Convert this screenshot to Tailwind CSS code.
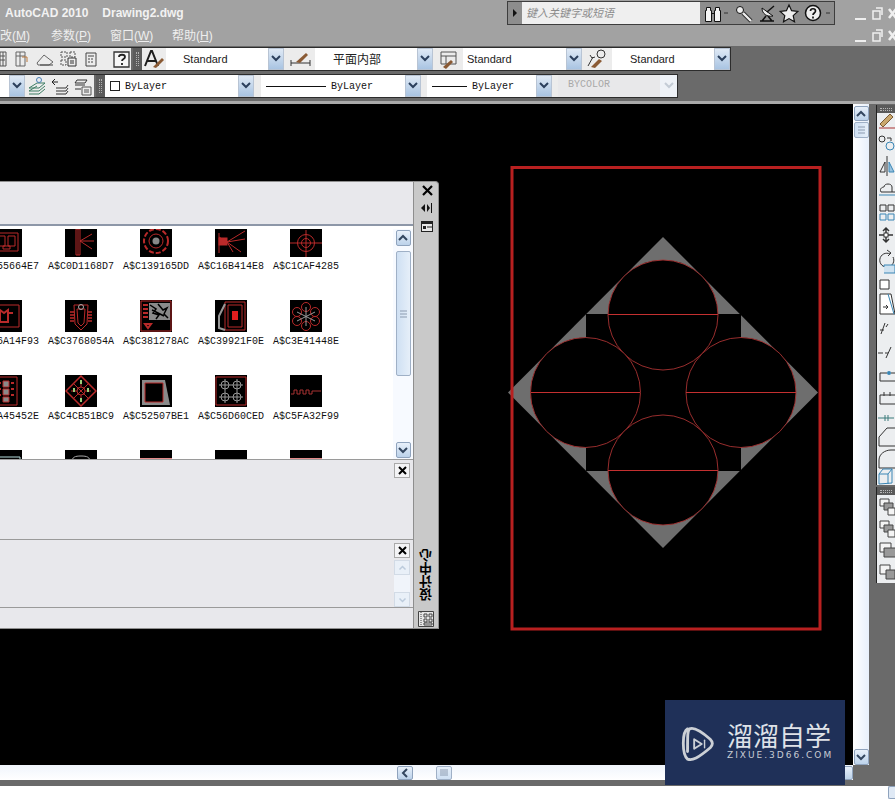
<!DOCTYPE html>
<html lang="zh">
<head>
<meta charset="utf-8">
<script src="https://cdn.jsdelivr.net/npm/@tailwindcss/browser@4"></script>
</head>
<body class="bg-white">
<div class="relative w-[895px] h-[806px] overflow-hidden flex flex-col bg-white font-['Liberation_Sans','Noto_Sans_CJK_SC',sans-serif]">

  <!-- title bar -->
  <div class="h-[25px] shrink-0 bg-[#a2a2a2] flex items-start">
    <div class="pt-[6px] pl-[5px] w-[507px] text-[12px] leading-[14px] font-bold text-[#f2f2f2] whitespace-nowrap flex gap-[14px]"><span>AutoCAD 2010</span><span>Drawing2.dwg</span></div>
    <div class="mt-[1px] w-[328px] h-[24px] border border-[#3d3d3d] bg-[#8d8d8d] flex items-center">
      <svg class="w-[14px] h-[22px]" viewBox="0 0 14 22"><path d="M5 7l4 4-4 4z" fill="#111"/></svg>
      <div class="w-[178px] h-[22px] bg-[#efefef] pl-[4px] text-[11px] leading-[22px] italic text-[#8c8c8c]">键入关键字或短语</div>
      <svg class="w-[133px] h-[22px]" viewBox="0 0 133 22" fill="none" stroke="#111">
        <g fill="#f4f4f4"><path d="M6.500 5.500h4v3h1v11h-6v-11h1z"/><path d="M15.500 5.500h4v3h1v11h-6v-11h1z"/></g><path d="M11.500 11.500h3"/>
        <path d="M24 11h4" stroke="#333"/>
        <circle cx="40" cy="8" r="3.500" fill="#eee"/><path d="M43 11l8 8" stroke="#222" stroke-width="4"/><path d="M43 11l8 8" stroke="#eee" stroke-width="2.400"/>
        <path d="M60 19h14M66 14l-4 5M68 14l4 5" stroke-width="1.600"/><path d="M62 6c0 6 5 9 11 8z" fill="#eee"/><path d="M67 10l7-6" stroke-width="1.400"/>
        <path d="M89 3l2.600 5.700 6.200.7-4.600 4.200 1.300 6.100-5.500-3.100-5.500 3.100 1.300-6.100-4.600-4.200 6.200-.7z" fill="#eee" stroke-width="1.200"/>
        <circle cx="113" cy="11" r="7.500" fill="#eee" stroke-width="1.500"/><path d="M110.500 9c0-3 5-3 5 0 0 2-2.500 2-2.500 4M113 14.500v2" stroke-width="1.700"/>
        <path d="M126 11h4" stroke="#333"/>
      </svg>
    </div>
    <div class="ml-[20px] pt-[5px]">
      <svg class="w-[40px] h-[18px]" viewBox="0 0 40 18" fill="none" stroke="#efefef" stroke-width="2"><path d="M0 14h11"/><path d="M18 6h7v8h-7zM21 3h6v7" stroke-width="1.500"/><path d="M34 4l7 9M41 4l-7 9" stroke-width="2.500"/></svg>
    </div>
  </div>

  <!-- menu bar -->
  <div class="h-[21px] shrink-0 bg-[#a2a2a2] flex items-start">
    <div class="-ml-[12px] w-[867px] pt-[2px] text-[12px] leading-[18px] text-[#eeeeee] flex whitespace-nowrap">
      <span class="w-[63px]">修改(<u>M</u>)</span><span class="w-[59px]">参数(<u>P</u>)</span><span class="w-[62px]">窗口(<u>W</u>)</span><span>帮助(<u>H</u>)</span>
    </div>
    <div class="pt-[3px] shrink-0">
      <svg class="w-[40px] h-[18px]" viewBox="0 0 40 18" fill="none" stroke="#efefef" stroke-width="2"><path d="M0 13h11"/><path d="M18 5h7v8h-7zM21 2h6v7" stroke-width="1.500"/><path d="M34 3l7 9M41 3l-7 9" stroke-width="2.500"/></svg>
    </div>
  </div>

  <!-- toolbars -->
  <div class="h-[55px] shrink-0 bg-[#6a6a6a] pt-[1px] font-['Liberation_Sans',sans-serif]">
    <div class="h-[24px] w-[731px] flex border-y border-[#2c2c2c] border-r bg-[#ececec]">
      <svg class="w-[131px] h-[22px] shrink-0" viewBox="0 0 131 22" fill="none" stroke="#555">
        <path d="M-4 4h10v14H-4zM-3 8h8M-3 12h8M0 4v14M3 4v14"/>
        <path d="M16 4h9v14h-9zM16 8h9M20 4v14" stroke="#666"/><path d="M22 9h5v5" stroke="#b9763b" />
        <path d="M37 15l7-8 9 7-4 3H38z" stroke="#666"/><path d="M40 17h13" stroke="#444"/>
        <path d="M61 4h6v5h-6zM70 4h5v5h-5zM61 12h5v5h-5z" stroke-dasharray="2 1"/><path d="M68 10h8v8h-8zM70 13h4M70 15h4" stroke="#333"/>
        <path d="M86 5h10v13H86zM88 8h6M88 11h2M91 11h2M88 14h2M91 14h2" stroke="#444"/>
        <path d="M114 4h15v15h-15z" fill="#f7f7f7" stroke="#333" stroke-width="1.300"/>
        <path d="M119 9c0-3 6-3 6 0 0 2-3 2-3 4M122 15v2" stroke="#222" stroke-width="1.800"/>
      </svg>
      <div class="w-[2px] bg-[#6a6a6a]"></div>
      <div class="w-[9px] bg-[#5c5c5c] flex justify-center"><div class="w-[3px] my-[4px] border-x border-dotted border-[#b0b0b0]"></div></div>
      <svg class="w-[24px] h-[22px] shrink-0" viewBox="0 0 24 22" fill="none"><path d="M3 18L9 3h1l6 15M5 13h9" stroke="#1c1c1c" stroke-width="2"/><path d="M11 19l9-9 2 2-8 8z" fill="#8a5a34"/></svg>
      <div class="w-[118px] flex bg-white"><span class="w-[102px] pl-[17px] text-[11px] leading-[22px] text-[#222]">Standard</span><span class="w-[16px] bg-gradient-to-b from-[#dfe9f5] to-[#a9c4e2] border border-[#b8c4d4] flex items-center justify-center"><svg class="w-[10px] h-[8px]" viewBox="0 0 10 8"><path d="M1 1l4 4 4-4" fill="none" stroke="#2b3f5c" stroke-width="2"/></svg></span></div>
      <svg class="w-[31px] h-[22px] shrink-0" viewBox="0 0 31 22" fill="none"><path d="M7 12v6M26 12v6M7 15h19" stroke="#333"/><path d="M12 14l10-9 2 2-8 8z" fill="#8a5a34"/></svg>
      <div class="w-[118px] flex bg-white"><span class="w-[102px] pl-[18px] text-[12px] leading-[22px] text-[#222] font-['Noto_Sans_CJK_SC',sans-serif]">平面内部</span><span class="w-[16px] bg-gradient-to-b from-[#dfe9f5] to-[#a9c4e2] border border-[#b8c4d4] flex items-center justify-center"><svg class="w-[10px] h-[8px]" viewBox="0 0 10 8"><path d="M1 1l4 4 4-4" fill="none" stroke="#2b3f5c" stroke-width="2"/></svg></span></div>
      <svg class="w-[30px] h-[22px] shrink-0" viewBox="0 0 30 22" fill="none"><path d="M8 4h15v12H8zM8 8h15M13 8v8" stroke="#555"/><path d="M10 19l8-7 2 2-7 7z" fill="#8a5a34"/></svg>
      <div class="w-[119px] flex bg-white"><span class="w-[103px] pl-[4px] text-[11px] leading-[22px] text-[#222]">Standard</span><span class="w-[16px] bg-gradient-to-b from-[#dfe9f5] to-[#a9c4e2] border border-[#b8c4d4] flex items-center justify-center"><svg class="w-[10px] h-[8px]" viewBox="0 0 10 8"><path d="M1 1l4 4 4-4" fill="none" stroke="#2b3f5c" stroke-width="2"/></svg></span></div>
      <svg class="w-[30px] h-[22px] shrink-0" viewBox="0 0 30 22" fill="none"><circle cx="19" cy="6" r="4" stroke="#333"/><path d="M6 18l5-9M8 7l2 3 3-1" stroke="#333"/><path d="M9 19l8-8 3 2-7 7z" fill="#8a5a34"/></svg>
      <div class="flex-1 flex bg-white"><span class="w-[102px] pl-[18px] text-[11px] leading-[22px] text-[#222]">Standard</span><span class="w-[16px] bg-gradient-to-b from-[#dfe9f5] to-[#a9c4e2] border border-[#b8c4d4] flex items-center justify-center"><svg class="w-[10px] h-[8px]" viewBox="0 0 10 8"><path d="M1 1l4 4 4-4" fill="none" stroke="#2b3f5c" stroke-width="2"/></svg></span></div>
    </div>
    <div class="h-[3px]"></div>
    <div class="h-[24px] w-[678px] flex border-y border-r border-[#2c2c2c] bg-[#ececec] font-['Liberation_Mono',monospace] text-[10px] text-[#111]">
      <div class="w-[25px] flex justify-end bg-white"><span class="w-[16px] bg-gradient-to-b from-[#dfe9f5] to-[#a9c4e2] border border-[#b8c4d4] flex items-center justify-center"><svg class="w-[10px] h-[8px]" viewBox="0 0 10 8"><path d="M1 1l4 4 4-4" fill="none" stroke="#2b3f5c" stroke-width="2"/></svg></span></div>
      <svg class="w-[69px] h-[22px] shrink-0" viewBox="0 0 69 22" fill="none">
        <path d="M4 13l8-5 8 0-6 5zM4 16l8-5M4 16h10l6-5M4 19h10l6-5" stroke="#3d7d63"/><circle cx="14" cy="5" r="2.500" stroke="#4a7fb5"/>
        <path d="M30 4l-3 3 3 3M27 7h6" stroke="#222"/><path d="M31 13h10l2-3M31 16h10l2-3M31 19h10l2-3" stroke="#333"/>
        <path d="M52 5h10l-2 3H50zM50 10h10M50 14h6" stroke="#333"/><path d="M57 12h9v8h-9zM59 15h5M59 17h5" stroke="#555"/>
      </svg>
      <div class="w-[2px] bg-[#6a6a6a]"></div>
      <div class="w-[9px] bg-[#5c5c5c] flex justify-center"><div class="w-[3px] my-[4px] border-x border-dotted border-[#b0b0b0]"></div></div>
      <div class="w-[149px] flex bg-white"><span class="w-[133px] pl-[5px] flex items-center gap-[5px]"><span class="w-[10px] h-[10px] border border-[#222]"></span>ByLayer</span><span class="w-[16px] bg-gradient-to-b from-[#dfe9f5] to-[#a9c4e2] border border-[#b8c4d4] flex items-center justify-center"><svg class="w-[10px] h-[8px]" viewBox="0 0 10 8"><path d="M1 1l4 4 4-4" fill="none" stroke="#2b3f5c" stroke-width="2"/></svg></span></div>
      <div class="w-[7px]"></div>
      <div class="w-[160px] flex bg-white"><span class="w-[144px] pl-[5px] flex items-center gap-[5px]"><span class="w-[60px] h-px bg-[#111]"></span>ByLayer</span><span class="w-[16px] bg-gradient-to-b from-[#dfe9f5] to-[#a9c4e2] border border-[#b8c4d4] flex items-center justify-center"><svg class="w-[10px] h-[8px]" viewBox="0 0 10 8"><path d="M1 1l4 4 4-4" fill="none" stroke="#2b3f5c" stroke-width="2"/></svg></span></div>
      <div class="w-[6px]"></div>
      <div class="w-[125px] flex bg-white"><span class="w-[109px] pl-[5px] flex items-center gap-[5px]"><span class="w-[35px] h-px bg-[#111]"></span>ByLayer</span><span class="w-[16px] bg-gradient-to-b from-[#dfe9f5] to-[#a9c4e2] border border-[#b8c4d4] flex items-center justify-center"><svg class="w-[10px] h-[8px]" viewBox="0 0 10 8"><path d="M1 1l4 4 4-4" fill="none" stroke="#2b3f5c" stroke-width="2"/></svg></span></div>
      <div class="w-[6px]"></div>
      <div class="flex-1 flex bg-[#e8e8ea]"><span class="w-[102px] pl-[10px] leading-[20px] text-[#a8a8a8]">BYCOLOR</span><span class="w-[17px] bg-[#eef2f7] flex items-center justify-center"><svg class="w-[10px] h-[8px]" viewBox="0 0 10 8"><path d="M1 1l4 4 4-4" fill="none" stroke="#c4ccd6" stroke-width="2"/></svg></span></div>
    </div>
  </div>
  <div class="h-[3px] shrink-0 bg-[#a9a9a9]"></div>

  <!-- work area -->
  <div class="flex-1 min-h-0 flex bg-[#6a6a6a]">
    <div class="w-[853px] flex flex-col shrink-0">
      <div class="relative flex-1 bg-black">
        <svg class="absolute left-0 top-0 w-[853px] h-[661px]" viewBox="0 104 853 661">
          <path d="M663 237L818 392.500 663 548 508 392.500z" fill="#6e6e6e"/>
          <rect x="586" y="314" width="155" height="157" fill="#000"/>
          <g fill="#000" stroke="#a83232" stroke-width=".9">
            <circle cx="663" cy="315" r="55"/>
            <circle cx="585.500" cy="392.500" r="55"/>
            <circle cx="741" cy="392.500" r="55"/>
            <circle cx="663" cy="470" r="55"/>
          </g>
          <path d="M608 314.500h110M531 392.500h109M686 392.500h110M608 470.500h110" stroke="#c43030" stroke-width="1"/>
          <rect x="512" y="167.500" width="308" height="461.500" fill="none" stroke="#b82020" stroke-width="3"/>
        </svg>

        <!-- floating palette -->
        <div class="absolute left-0 top-[77px] w-[439px] h-[448px] flex bg-[#c9c9c9] border-y border-r border-[#8e8e8e] rounded-tr-[4px]">
          <div class="w-[414px] flex flex-col bg-[#e8e8ec] border-r border-[#8e8e8e] shrink-0">
            <div class="h-[44px] shrink-0 border-b-2 border-[#8d97a8]"></div>
            <div class="h-[3px] shrink-0 bg-[#ffffff]"></div>
            <div class="h-[231px] shrink-0 flex bg-white border-b border-[#9a9a9a] overflow-hidden">
              <div class="w-[393px] shrink-0 overflow-hidden font-['Liberation_Mono',monospace] text-[10px] leading-[12px] text-[#111]">
                <div class="-mt-[4px] -ml-[31px] w-[424px] grid grid-cols-[repeat(5,75px)] auto-rows-[75px]">
                  <div class="flex flex-col items-start"><svg class="ml-[21px] w-[32px] h-[32px] bg-black" viewBox="0 0 32 32" fill="none" stroke="#b92a2a"><path d="M4 8h24v18H4zM8 11h7v10H8zM18 11h7v10h-7zM13 21h7v3h-7z"/></svg><span class="ml-[4px] mt-[4px] whitespace-nowrap">A$C055664E7</span></div>
                  <div class="flex flex-col items-start"><svg class="ml-[21px] w-[32px] h-[32px] bg-black" viewBox="0 0 32 32" fill="none" stroke="#b92a2a"><path d="M13 2v28M11 4h4v26h-4zM15 16l12-7M15 16h14M15 16l12 8" /></svg><span class="ml-[4px] mt-[4px] whitespace-nowrap">A$C0D1168D7</span></div>
                  <div class="flex flex-col items-start"><svg class="ml-[21px] w-[32px] h-[32px] bg-black" viewBox="0 0 32 32" fill="none" stroke="#b92a2a"><circle cx="16" cy="16" r="12" stroke-dasharray="5 2" stroke-width="2"/><circle cx="16" cy="16" r="7"/><circle cx="16" cy="16" r="3.500" fill="#888" stroke="none"/></svg><span class="ml-[4px] mt-[4px] whitespace-nowrap">A$C139165DD</span></div>
                  <div class="flex flex-col items-start"><svg class="ml-[21px] w-[32px] h-[32px] bg-black" viewBox="0 0 32 32" fill="none" stroke="#b92a2a"><path d="M4 8v20M4 12l8 5 18-11M12 17l18-3M12 17l14 10M12 17l6 10"/><rect x="4" y="13" width="8" height="7" fill="#b92a2a"/></svg><span class="ml-[4px] mt-[4px] whitespace-nowrap">A$C16B414E8</span></div>
                  <div class="flex flex-col items-start"><svg class="ml-[21px] w-[32px] h-[32px] bg-black" viewBox="0 0 32 32" fill="none" stroke="#b92a2a"><circle cx="16" cy="18" r="8.500"/><circle cx="16" cy="18" r="4.500"/><path d="M0 18h32M16 5v27"/></svg><span class="ml-[4px] mt-[4px] whitespace-nowrap">A$C1CAF4285</span></div>

                  <div class="flex flex-col items-start"><svg class="ml-[21px] w-[32px] h-[32px] bg-black" viewBox="0 0 32 32" fill="none" stroke="#b92a2a"><path d="M3 5h26v22H3z"/><path d="M10 10l4 3 4-3v12h-8zM6 13h4M18 13h5" stroke-width="2"/></svg><span class="ml-[4px] mt-[4px] whitespace-nowrap">A$C26A14F93</span></div>
                  <div class="flex flex-col items-start"><svg class="ml-[21px] w-[32px] h-[32px] bg-black" viewBox="0 0 32 32" fill="none" stroke="#b92a2a"><path d="M9 5h14l-1 19-6 6-6-6zM12 9h8l-1 14-3 3-3-3z"/><circle cx="16" cy="7" r="2.500" stroke="#aaa"/><path d="M5 12h4M5 15h4M5 18h4M5 21h4M23 12h4M23 15h4M23 18h4M23 21h4" stroke-width="1.500"/></svg><span class="ml-[4px] mt-[4px] whitespace-nowrap">A$C3768054A</span></div>
                  <div class="flex flex-col items-start"><svg class="ml-[21px] w-[32px] h-[32px] bg-black" viewBox="0 0 32 32" fill="none" stroke="#b92a2a"><path d="M1 1h30v30H1z"/><path d="M9 3h21v17H9z" fill="#8a8a8a" stroke="none"/><path d="M10 5l6 4-3 4 6 2-3 4M18 4l5 6 4-2-3 6 4 4M12 10l12 6" stroke="#000" stroke-width="1.500"/><path d="M3 5h5M3 9h5M3 13h5M3 17h5M5 24h6l-3 4z" stroke-width="2"/></svg><span class="ml-[4px] mt-[4px] whitespace-nowrap">A$C381278AC</span></div>
                  <div class="flex flex-col items-start"><svg class="ml-[21px] w-[32px] h-[32px] bg-black" viewBox="0 0 32 32" fill="none" stroke="#b92a2a"><path d="M10 2h20v28H10zM13 5h14v22H13z"/><path d="M10 4L4 16v12l6 2" stroke="#999" stroke-width="2"/><rect x="17" y="11" width="6" height="9" fill="#e01e1e" stroke="none"/></svg><span class="ml-[4px] mt-[4px] whitespace-nowrap">A$C39921F0E</span></div>
                  <div class="flex flex-col items-start"><svg class="ml-[21px] w-[32px] h-[32px] bg-black" viewBox="0 0 32 32" fill="none" stroke="#b92a2a"><g><circle cx="16" cy="7" r="4.500"/><circle cx="25" cy="12" r="4.500"/><circle cx="25" cy="21" r="4.500"/><circle cx="16" cy="26" r="4.500"/><circle cx="7" cy="21" r="4.500"/><circle cx="7" cy="12" r="4.500"/></g><path d="M16 7v19M25 12L7 21M7 12l18 9" stroke="#999"/></svg><span class="ml-[4px] mt-[4px] whitespace-nowrap">A$C3E41448E</span></div>

                  <div class="flex flex-col items-start"><svg class="ml-[21px] w-[32px] h-[32px] bg-black" viewBox="0 0 32 32" fill="none" stroke="#b92a2a"><path d="M5 2h22v28H5z"/><path d="M13 6h6v6h-6zM13 14h6v6h-6zM13 22h6v5h-6z" fill="#8a8a8a"/><path d="M8 8h3M8 14h3M8 20h3M21 8h3M21 14h3M21 20h3" stroke-width="2"/></svg><span class="ml-[4px] mt-[4px] whitespace-nowrap">A$C4A45452E</span></div>
                  <div class="flex flex-col items-start"><svg class="ml-[21px] w-[32px] h-[32px] bg-black" viewBox="0 0 32 32" fill="none" stroke="#b92a2a"><path d="M16 1l15 15-15 15L1 16z" stroke-width="1.500"/><circle cx="16" cy="16" r="4"/><path d="M16 6v6M6 16h6M20 16h6M16 20v6M9 9l14 14M23 9L9 23"/><path d="M15 5h2v4h-2zM8 13h2v4H8zM22 13h2v4h-2zM15 23h2v4h-2z" fill="#9ad07a" stroke="none"/></svg><span class="ml-[4px] mt-[4px] whitespace-nowrap">A$C4CB51BC9</span></div>
                  <div class="flex flex-col items-start"><svg class="ml-[21px] w-[32px] h-[32px] bg-black" viewBox="0 0 32 32" fill="none"><path d="M2 5h23l5 25H2z" fill="#8a8a8a"/><path d="M5 8h18v19H5z" fill="#000" stroke="#b92a2a"/></svg><span class="ml-[4px] mt-[4px] whitespace-nowrap">A$C52507BE1</span></div>
                  <div class="flex flex-col items-start"><svg class="ml-[21px] w-[32px] h-[32px] bg-black" viewBox="0 0 32 32" fill="none" stroke="#b92a2a"><path d="M1 2h30v28H1z"/><g stroke="#999"><circle cx="10" cy="10" r="4"/><circle cx="22" cy="10" r="4"/><circle cx="10" cy="22" r="4"/><circle cx="22" cy="22" r="4"/><path d="M4 10h12M16 10h12M10 4v12M22 4v12M4 22h12M16 22h12M10 16v12M22 16v12"/></g></svg><span class="ml-[4px] mt-[4px] whitespace-nowrap">A$C56D60CED</span></div>
                  <div class="flex flex-col items-start"><svg class="ml-[21px] w-[32px] h-[32px] bg-black" viewBox="0 0 32 32" fill="none" stroke="#a83232"><path d="M1 19h3v-4h3v4h3v-4h3v4h3v-4h3v4h3v-3h9"/></svg><span class="ml-[4px] mt-[4px] whitespace-nowrap">A$C5FA32F99</span></div>

                  <div class="flex flex-col items-start"><svg class="ml-[21px] w-[32px] h-[32px] bg-black" viewBox="0 0 32 32" fill="none" stroke="#b7dcdc"><path d="M2 7h28v24H2z"/></svg></div>
                  <div class="flex flex-col items-start"><svg class="ml-[21px] w-[32px] h-[32px] bg-black" viewBox="0 0 32 32" fill="none" stroke="#aaa"><path d="M7 12c0-5 3-6 9-6s9 1 9 6"/></svg></div>
                  <div class="flex flex-col items-start"><svg class="ml-[21px] w-[32px] h-[32px] bg-black" viewBox="0 0 32 32"><rect y="8" width="32" height="24" fill="#e58a8a"/></svg></div>
                  <div class="flex flex-col items-start"><svg class="ml-[21px] w-[32px] h-[32px] bg-black" viewBox="0 0 32 32"></svg></div>
                  <div class="flex flex-col items-start"><svg class="ml-[21px] w-[32px] h-[32px] bg-black" viewBox="0 0 32 32"><rect y="8" width="32" height="24" fill="#e58a8a"/></svg></div>
                </div>
              </div>
              <!-- list scrollbar -->
              <div class="w-[20px] shrink-0 flex flex-col items-center bg-[#f7faff]">
                <div class="w-[15px] h-[16px] mt-[1px] rounded-[2px] border border-[#8fa3bd] bg-gradient-to-b from-[#e8f0fa] to-[#bcd2ea] flex items-center justify-center"><svg class="w-[10px] h-[8px]" viewBox="0 0 10 8"><path d="M1 6l4-4 4 4" fill="none" stroke="#33465f" stroke-width="2"/></svg></div>
                <div class="w-[15px] h-[125px] mt-[5px] rounded-[2px] border border-[#9fb0c6] bg-gradient-to-r from-[#cfe0f3] to-[#e6eff9] flex items-center justify-center"><svg class="w-[7px] h-[8px]" viewBox="0 0 7 8"><path d="M0 1h7M0 4h7M0 7h7" stroke="#8c9bb0"/></svg></div>
                <div class="flex-1"></div>
                <div class="w-[15px] h-[16px] mb-px rounded-[2px] border border-[#8fa3bd] bg-gradient-to-b from-[#e8f0fa] to-[#bcd2ea] flex items-center justify-center"><svg class="w-[10px] h-[8px]" viewBox="0 0 10 8"><path d="M1 2l4 4 4-4" fill="none" stroke="#33465f" stroke-width="2"/></svg></div>
              </div>
            </div>
            <!-- preview section -->
            <div class="h-[80px] shrink-0 flex justify-end border-b border-[#9a9a9a] pr-[3px] pt-[3px]">
              <div class="w-[16px] h-[15px] bg-[#f4f4f6] border border-[#a9a9a9] flex items-center justify-center"><svg class="w-[9px] h-[9px]" viewBox="0 0 9 9"><path d="M1 1l7 7M8 1L1 8" stroke="#000" stroke-width="2"/></svg></div>
            </div>
            <!-- description section -->
            <div class="h-[68px] shrink-0 flex justify-end border-b border-[#9a9a9a] pr-[3px] pt-[3px]">
              <div class="flex flex-col w-[16px]">
                <div class="h-[15px] bg-[#f4f4f6] border border-[#a9a9a9] flex items-center justify-center"><svg class="w-[9px] h-[9px]" viewBox="0 0 9 9"><path d="M1 1l7 7M8 1L1 8" stroke="#000" stroke-width="2"/></svg></div>
                <div class="h-[15px] mt-[2px] bg-[#e9f0f8] border border-[#d2dbe6] flex items-center justify-center"><svg class="w-[9px] h-[6px]" viewBox="0 0 10 8"><path d="M1 6l4-4 4 4" fill="none" stroke="#bccbdc" stroke-width="2"/></svg></div>
                <div class="h-[17px] bg-[#f0f4fa]"></div>
                <div class="h-[15px] bg-[#e9f0f8] border border-[#d2dbe6] flex items-center justify-center"><svg class="w-[9px] h-[6px]" viewBox="0 0 10 8"><path d="M1 2l4 4 4-4" fill="none" stroke="#bccbdc" stroke-width="2"/></svg></div>
              </div>
            </div>
            <div class="flex-1"></div>
          </div>
          <!-- palette title strip -->
          <div class="flex-1 flex flex-col items-center">
            <svg class="mt-[3px] ml-[3px] w-[11px] h-[11px]" viewBox="0 0 11 11"><path d="M1 1l9 9M10 1L1 10" stroke="#000" stroke-width="2.200"/></svg>
            <svg class="mt-[7px] w-[12px] h-[10px]" viewBox="0 0 12 10"><path d="M5 1v8L1 5zM7 1v8l3-4z" fill="#111"/><path d="M11.500 0v10" stroke="#111"/></svg>
            <svg class="mt-[8px] ml-[2px] w-[12px] h-[11px]" viewBox="0 0 12 11"><rect width="12" height="11" fill="#222"/><path d="M1 3h10v7H1z" fill="#e9e9e9"/><path d="M2 5h3v3H2z" fill="#222"/><path d="M6 6h5" stroke="#222"/></svg>
            <div class="flex-1"></div>
            <div class="[writing-mode:vertical-rl] rotate-180 text-[13px] leading-[14px] font-bold text-black font-['Noto_Sans_CJK_SC',sans-serif]">设计中心</div>
            <svg class="mt-[10px] mb-[1px] w-[16px] h-[16px]" viewBox="0 0 16 16" fill="none" stroke="#444"><path d="M.5.5h15v15H.5z" fill="#e6e6e6"/><path d="M3 1v14" stroke-dasharray="1 1"/><path d="M6 3h3v3H6zM11 3h3v3h-3zM6 8h3v3H6zM11 8h3v3h-3zM6 12h8v2H6z"/></svg>
          </div>
        </div>
      </div>

      <!-- horizontal scrollbar -->
      <div class="h-[15px] shrink-0 bg-gradient-to-b from-[#f0f5fc] to-[#ffffff] flex items-center pl-[397px]">
        <div class="w-[16px] h-[14px] rounded-[2px] border border-[#8fa3bd] bg-gradient-to-b from-[#e8f0fa] to-[#bcd2ea] flex items-center justify-center"><svg class="w-[8px] h-[10px]" viewBox="0 0 8 10"><path d="M6 1L2 5l4 4" fill="none" stroke="#33465f" stroke-width="2"/></svg></div>
        <div class="ml-[23px] w-[16px] h-[14px] rounded-[2px] border border-[#9fb0c6] bg-gradient-to-b from-[#e6eff9] to-[#cfe0f3] flex items-center justify-center"><svg class="w-[8px] h-[7px]" viewBox="0 0 8 7"><path d="M1 0v7M3 0v7M5 0v7M7 0v7" stroke="#8c9bb0"/></svg></div>
        <div class="ml-auto w-[16px] h-[14px] rounded-[2px] border border-[#8fa3bd] bg-gradient-to-b from-[#e8f0fa] to-[#bcd2ea]"></div>
      </div>
    </div>

    <!-- vertical scrollbar -->
    <div class="w-[16px] shrink-0 h-[661px] bg-gradient-to-r from-[#ffffff] to-[#e8f0fb] flex flex-col items-center pt-[2px]">
      <div class="w-[15px] h-[15px] rounded-[2px] border border-[#8fa3bd] bg-gradient-to-b from-[#e8f0fa] to-[#bcd2ea] flex items-center justify-center"><svg class="w-[10px] h-[8px]" viewBox="0 0 10 8"><path d="M1 6l4-4 4 4" fill="none" stroke="#33465f" stroke-width="2"/></svg></div>
      <div class="w-[15px] h-[16px] mt-px rounded-[2px] border border-[#9fb0c6] bg-gradient-to-r from-[#cfe0f3] to-[#e6eff9] flex items-center justify-center"><svg class="w-[7px] h-[8px]" viewBox="0 0 7 8"><path d="M0 1h7M0 4h7M0 7h7" stroke="#8c9bb0"/></svg></div>
      <div class="flex-1"></div>
      <div class="w-[15px] h-[16px] rounded-[2px] border border-[#8fa3bd] bg-gradient-to-b from-[#e8f0fa] to-[#bcd2ea] flex items-center justify-center"><svg class="w-[10px] h-[8px]" viewBox="0 0 10 8"><path d="M1 2l4 4 4-4" fill="none" stroke="#33465f" stroke-width="2"/></svg></div>
    </div>

    <div class="w-[7px] shrink-0"></div>

    <!-- right tool palettes -->
    <div class="flex-1 flex flex-col pt-[1px]">
      <div class="h-[380px] bg-[#eceef0] border-l border-[#222] overflow-hidden">
        <div class="h-[8px] bg-[#5a5a5a] flex items-center justify-center"><div class="w-[12px] h-[3px] border-y border-dotted border-[#b8b8b8]"></div></div>
        <svg class="w-[18px] h-[373px]" viewBox="0 5 18 373" fill="none" stroke="#333">
          <path d="M3 16l10-10 3 3-10 10z" fill="#c9a76d" stroke="#7a5a33"/><path d="M2 20h16" stroke="#a33"/>
          <circle cx="5" cy="31" r="3"/><path d="M10 30h4v3"/><circle cx="13" cy="38" r="4" stroke="#3a86b5"/>
          <path d="M8 54l-5 10h5zM10 48v20" /><path d="M12 54l5 10h-5z" fill="#9ac3df" stroke="#3a86b5"/>
          <path d="M4 84c-2-4 2-5 3-5 0-4 8-4 8 0v5" /><path d="M2 87h16" stroke="#3a86b5"/><path d="M4 84h14" />
          <path d="M3 97h6v6H3zM11 97h6v6h-6z"/><path d="M3 106h6v6H3zM11 106h6v6h-6z" stroke="#3a86b5"/>
          <path d="M9 120v14M2 127h14M6 123l3-3 3 3M6 131l3 3 3-3" stroke-width="1.500"/><rect x="7" y="125" width="4" height="4" fill="#fff"/>
          <path d="M13 146a7 7 0 1 0 3 3"/><path d="M10 142l4 3-3 3" />
          <path d="M7 165h11v-8H7v2" stroke="#3a86b5" fill="#cfe2f0"/><path d="M3 172h9v9H3z" fill="#fff"/>
          <path d="M3 186h11l4 20H3z" fill="#fff"/><path d="M11 186l6 20" stroke="#3a86b5"/><path d="M6 199h5M9 197l2 2-2 2" />
          <path d="M3 222h4M9 219l2-3M4 226l4-11" />
          <path d="M1 245h5M8 245h3M9 250l5-11" />
          <path d="M3 273v-8h7M14 265h4" /><circle cx="12" cy="265" r="2" fill="#3a86b5" stroke="none"/><path d="M3 273h15" />
          <path d="M3 287h15M3 287v9h15M7 284v4M13 284v4" />
          <path d="M1 310h16M8 307v6M11 307v6" stroke="#3a7b7b"/>
          <path d="M2 338v-9l8-9h8M2 338h16" />
          <path d="M2 360v-8c0-6 6-10 12-10h4M2 360h16" />
          <path d="M2 376v-10l4-5h9v14zM2 366h9l4-5M11 366v10" stroke="#3a86b5"/>
        </svg>
      </div>
      <div class="h-[2px]"></div>
      <div class="h-[96px] bg-[#eceef0] border-l border-[#222] overflow-hidden">
        <div class="h-[8px] bg-[#5a5a5a] flex items-center justify-center"><div class="w-[12px] h-[3px] border-y border-dotted border-[#b8b8b8]"></div></div>
        <svg class="w-[18px] h-[88px]" viewBox="0 0 18 88" fill="none" stroke="#444">
          <path d="M3 4h9v7H3z" fill="#f4f4f4"/><path d="M7 8h9v7H7z" fill="#999"/><path d="M11 13h7v7h-7z" fill="#f4f4f4"/>
          <path d="M3 26h9v7H3z" fill="#f4f4f4"/><path d="M7 30h9v7H7z" fill="#999"/><path d="M11 35h7v7h-7z" fill="#f4f4f4"/>
          <path d="M3 48h11v9H3z" fill="#f4f4f4"/><path d="M7 53h12v9H7z" fill="#999"/>
          <path d="M3 70h10v9H3z" fill="#f4f4f4"/><path d="M9 75h9v9H9z" fill="#999"/>
        </svg>
      </div>
    </div>
  </div>

  <!-- footer -->
  <div class="h-[6px] shrink-0 bg-[#6a6a6a]"></div>
  <div class="h-[20px] shrink-0 bg-white flex justify-end items-start">
    <div class="w-[7px] h-[13px] rounded-l-[2px] border-y border-l border-[#8fa3bd] bg-[#dfe9f5]"></div>
  </div>

  <!-- watermark -->
  <div class="absolute left-[665px] top-[700px] w-[180px] h-[85px] bg-[#1f3058] flex items-start pt-[21px] pl-[15px]">
    <svg class="mt-[5px] w-[34px] h-[36px] shrink-0" viewBox="0 0 36 38" fill="none" stroke="#ccd0d6" stroke-width="3" stroke-linecap="round" stroke-linejoin="round">
      <path d="M8 3C2 6 2 30 8 35c5 2 11-1 24-12 3-3 3-6 0-9C22 5 14 1 10 3c-2 2-2 6-2 24"/>
      <path d="M15 14l8 5-8 5z" stroke-width="2"/><path d="M26 15v8" stroke-width="1.500"/>
    </svg>
    <div class="ml-[13px] flex flex-col">
      <div class="text-[26px] leading-[28px] text-[#dfe2e8] whitespace-nowrap font-['Noto_Sans_CJK_SC',sans-serif]">溜溜自学</div>
      <div class="mt-[1px] text-[9px] leading-[11px] text-[#c8ccd4] tracking-[2px] whitespace-nowrap font-['DejaVu_Sans',sans-serif]">ZIXUE.3D66.COM</div>
    </div>
  </div>
</div>
</body>
</html>
